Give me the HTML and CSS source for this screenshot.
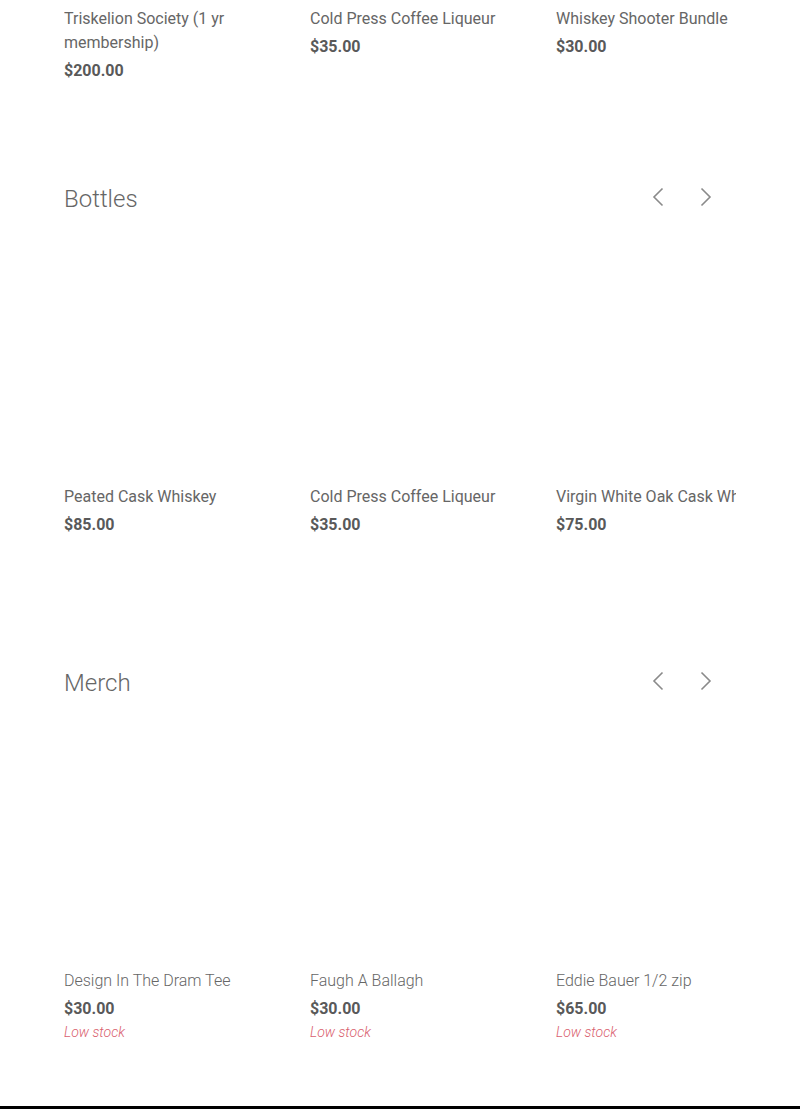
FILE: index.html
```html
<!DOCTYPE html>
<html lang="en">
<head>
<meta charset="utf-8">
<title>Shop</title>
<link rel="stylesheet" href="styles.css">
</head>
<body>
<main class="page">
  <section class="collection collection--partial">
    <div class="track">
      <article class="card">
        <div class="card-info">
          <h3 class="card-title">Triskelion Society (1 yr membership)</h3>
          <p class="card-price">$200.00</p>
        </div>
      </article>
      <article class="card">
        <div class="card-info">
          <h3 class="card-title">Cold Press Coffee Liqueur</h3>
          <p class="card-price">$35.00</p>
        </div>
      </article>
      <article class="card">
        <div class="card-info">
          <h3 class="card-title">Whiskey Shooter Bundle</h3>
          <p class="card-price">$30.00</p>
        </div>
      </article>
    </div>
  </section>

  <section class="collection">
    <header class="collection-head">
      <h2 class="collection-title">Bottles</h2>
      <div class="arrows">
        <button class="arrow" aria-label="Previous"><svg width="12" height="20" viewBox="0 0 12 20"><path d="M10.5 1.5 L2 10 L10.5 18.5" fill="none" stroke="#8a8a8a" stroke-width="1.6"/></svg></button>
        <button class="arrow" aria-label="Next"><svg width="12" height="20" viewBox="0 0 12 20"><path d="M1.5 1.5 L10 10 L1.5 18.5" fill="none" stroke="#8a8a8a" stroke-width="1.6"/></svg></button>
      </div>
    </header>
    <div class="track">
      <article class="card">
        <div class="card-image"></div>
        <div class="card-info">
          <h3 class="card-title">Peated Cask Whiskey</h3>
          <p class="card-price">$85.00</p>
        </div>
      </article>
      <article class="card">
        <div class="card-image"></div>
        <div class="card-info">
          <h3 class="card-title">Cold Press Coffee Liqueur</h3>
          <p class="card-price">$35.00</p>
        </div>
      </article>
      <article class="card">
        <div class="card-image"></div>
        <div class="card-info">
          <h3 class="card-title card-title--clip">Virgin White Oak Cask Whiskey</h3>
          <p class="card-price">$75.00</p>
        </div>
      </article>
    </div>
  </section>

  <section class="collection">
    <header class="collection-head">
      <h2 class="collection-title">Merch</h2>
      <div class="arrows">
        <button class="arrow" aria-label="Previous"><svg width="12" height="20" viewBox="0 0 12 20"><path d="M10.5 1.5 L2 10 L10.5 18.5" fill="none" stroke="#8a8a8a" stroke-width="1.6"/></svg></button>
        <button class="arrow" aria-label="Next"><svg width="12" height="20" viewBox="0 0 12 20"><path d="M1.5 1.5 L10 10 L1.5 18.5" fill="none" stroke="#8a8a8a" stroke-width="1.6"/></svg></button>
      </div>
    </header>
    <div class="track">
      <article class="card">
        <div class="card-image"></div>
        <div class="card-info">
          <h3 class="card-title card-title--light">Design In The Dram Tee</h3>
          <p class="card-price">$30.00</p>
          <p class="card-stock">Low stock</p>
        </div>
      </article>
      <article class="card">
        <div class="card-image"></div>
        <div class="card-info">
          <h3 class="card-title card-title--light">Faugh A Ballagh</h3>
          <p class="card-price">$30.00</p>
          <p class="card-stock">Low stock</p>
        </div>
      </article>
      <article class="card">
        <div class="card-image"></div>
        <div class="card-info">
          <h3 class="card-title card-title--light">Eddie Bauer 1/2 zip</h3>
          <p class="card-price">$65.00</p>
          <p class="card-stock">Low stock</p>
        </div>
      </article>
    </div>
  </section>
</main>
<footer class="footer"></footer>
</body>
</html>
```

FILE: styles.css
```css
* { box-sizing: border-box; }
html, body { margin: 0; padding: 0; background: #fff; }
body {
  font-family: Roboto, "Liberation Sans", Arial, sans-serif;
  color: #666;
  overflow: hidden;
}
.page { padding: 0 64px; }

.collection { margin-top: 91px; }
.collection--partial { margin-top: 0; padding-top: 7px; }

.collection-head {
  display: flex;
  align-items: center;
  justify-content: space-between;
  height: 48px;
}
.collection-title {
  margin: 0;
  font-size: 24px;
  font-weight: 300;
  color: #666;
  line-height: 48px;
  position: relative;
  top: 1px;
}
.arrows {
  display: flex;
  margin-right: 6px;
}
.arrow {
  width: 48px;
  height: 48px;
  border: 0;
  padding: 0;
  background: none;
  display: flex;
  align-items: center;
  justify-content: center;
  cursor: pointer;
  position: relative;
  top: -1px;
}

.track {
  display: flex;
  gap: 20px;
  overflow: hidden;
}
.card {
  flex: 0 0 226px;
}
.card-image {
  height: 263px;
}
.card-info {
  min-height: 82px;
}
.collection--partial .card-info { min-height: 76px; }

.card-title {
  margin: 0;
  font-size: 16px;
  font-weight: 400;
  line-height: 24px;
  color: #666;
}
.card-title--clip { white-space: nowrap; }
.card-title--light { font-weight: 300; }
.card-price {
  margin: 4px 0 0;
  font-size: 16px;
  font-weight: 700;
  line-height: 24px;
  color: #595959;
}
.card-stock {
  margin: -1px 0 0;
  font-size: 14px;
  font-style: italic;
  font-weight: 300;
  line-height: 24px;
  color: #d9606e;
}

.footer {
  margin-top: 55px;
  border-top: 4px solid #000;
  height: 40px;
}
```
